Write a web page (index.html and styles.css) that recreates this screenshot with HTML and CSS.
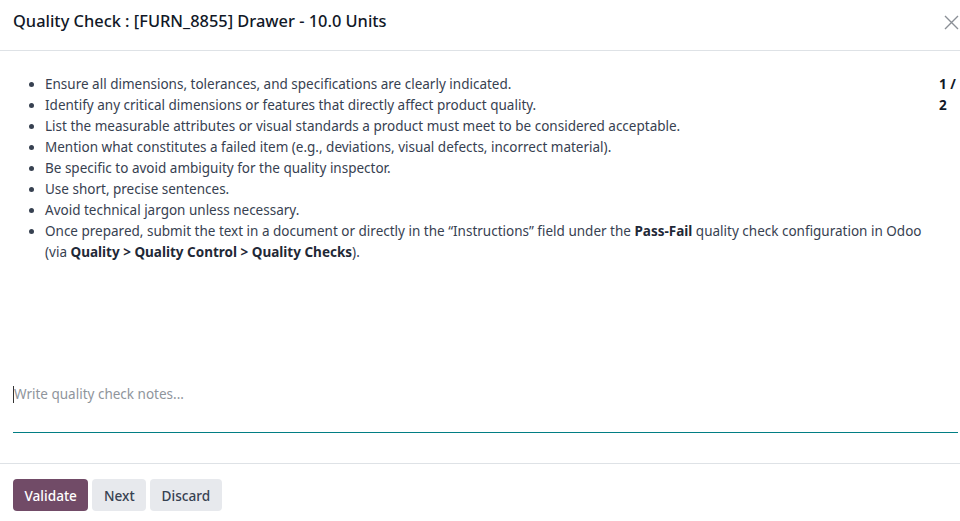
FILE: index.html
```html
<!DOCTYPE html>
<html lang="en">
<head>
<meta charset="utf-8">
<title>Quality Check</title>
<link rel="stylesheet" href="styles.css">
</head>
<body>
<div class="modal">
  <header class="modal-header">
    <h4 class="modal-title">Quality Check : [FURN_8855] Drawer - 10.0 Units</h4>
    <button class="close-btn" aria-label="Close">
      <svg width="15" height="15" viewBox="0 0 15 15"><path d="M1 1L14 14M14 1L1 14" stroke="#8a8f96" stroke-width="1.4" fill="none"/></svg>
    </button>
  </header>
  <main class="modal-body">
    <div class="content-row">
      <ul class="instructions">
        <li>Ensure all dimensions, tolerances, and specifications are clearly indicated.</li>
        <li>Identify any critical dimensions or features that directly affect product quality.</li>
        <li>List the measurable attributes or visual standards a product must meet to be considered acceptable.</li>
        <li>Mention what constitutes a failed item (e.g., deviations, visual defects, incorrect material).</li>
        <li>Be specific to avoid ambiguity for the quality inspector.</li>
        <li>Use short, precise sentences.</li>
        <li>Avoid technical jargon unless necessary.</li>
        <li>Once prepared, submit the text in a document or directly in the “Instructions” field under the <b>Pass-Fail</b> quality check configuration in Odoo (via <b>Quality &gt; Quality Control &gt; Quality Checks</b>).</li>
      </ul>
      <div class="pager">1 / 2</div>
    </div>
    <div class="notes">
      <span class="caret"></span><span class="placeholder">Write quality check notes...</span>
    </div>
  </main>
  <footer class="modal-footer">
    <button class="btn btn-primary">Validate</button>
    <button class="btn btn-secondary">Next</button>
    <button class="btn btn-secondary">Discard</button>
  </footer>
</div>
</body>
</html>
```
FILE: styles.css
```css
* { box-sizing: border-box; }
html, body { margin: 0; padding: 0; background: #fff; }
body {
  font-family: "Noto Sans", "Open Sans", sans-serif;
  font-size: 13.5px;
  color: #374151;
  width: 960px;
  height: 521px;
  overflow: hidden;
}
.modal {
  display: flex;
  flex-direction: column;
  height: 521px;
}
.modal-header {
  height: 51px;
  flex: none;
  display: flex;
  align-items: flex-start;
  justify-content: space-between;
  padding: 10px 1px 0 13px;
  border-bottom: 1px solid #dee2e6;
}
.modal-title {
  margin: 0;
  font-size: 16.4px;
  font-weight: 500;
  line-height: 22px;
  color: #111827;
}
.close-btn {
  border: 0;
  background: none;
  padding: 0;
  margin-top: 4px;
  width: 16px;
  height: 16px;
  display: flex;
  align-items: center;
  justify-content: center;
}
.modal-body {
  flex: 1;
  display: flex;
  flex-direction: column;
  padding: 23px 0 30px 13px;
}
.content-row {
  display: flex;
  justify-content: space-between;
}
.instructions {
  margin: 0;
  padding-left: 32px;
  line-height: 21px;
  width: 913px;
}
.instructions b { font-weight: 700; color: #1f2937; }
.pager {
  width: 21px;
  text-align: left;
  font-weight: 700;
  line-height: 21px;
  color: #111827;
}
.notes {
  margin-top: auto;
  height: 50px;
  margin-right: 2px;
  border-bottom: 1px solid #017e84;
  line-height: 21px;
  padding-top: 1px;
  display: flex;
  align-items: flex-start;
}
.caret {
  width: 1px;
  height: 17px;
  background: #333;
  margin-top: 2px;
}
.placeholder { color: #8f959c; }
.modal-footer {
  flex: none;
  border-top: 1px solid #dee2e6;
  padding: 15px 13px 10px;
  display: flex;
  gap: 4px;
}
.btn {
  height: 32px;
  border: 0;
  border-radius: 4px;
  font-family: inherit;
  font-size: 13.6px;
  font-weight: 500;
  padding: 0 11.5px;
  cursor: pointer;
}
.btn-primary { background: #714b67; color: #fff; }
.btn-secondary { background: #e7e9ed; color: #374151; }
```
